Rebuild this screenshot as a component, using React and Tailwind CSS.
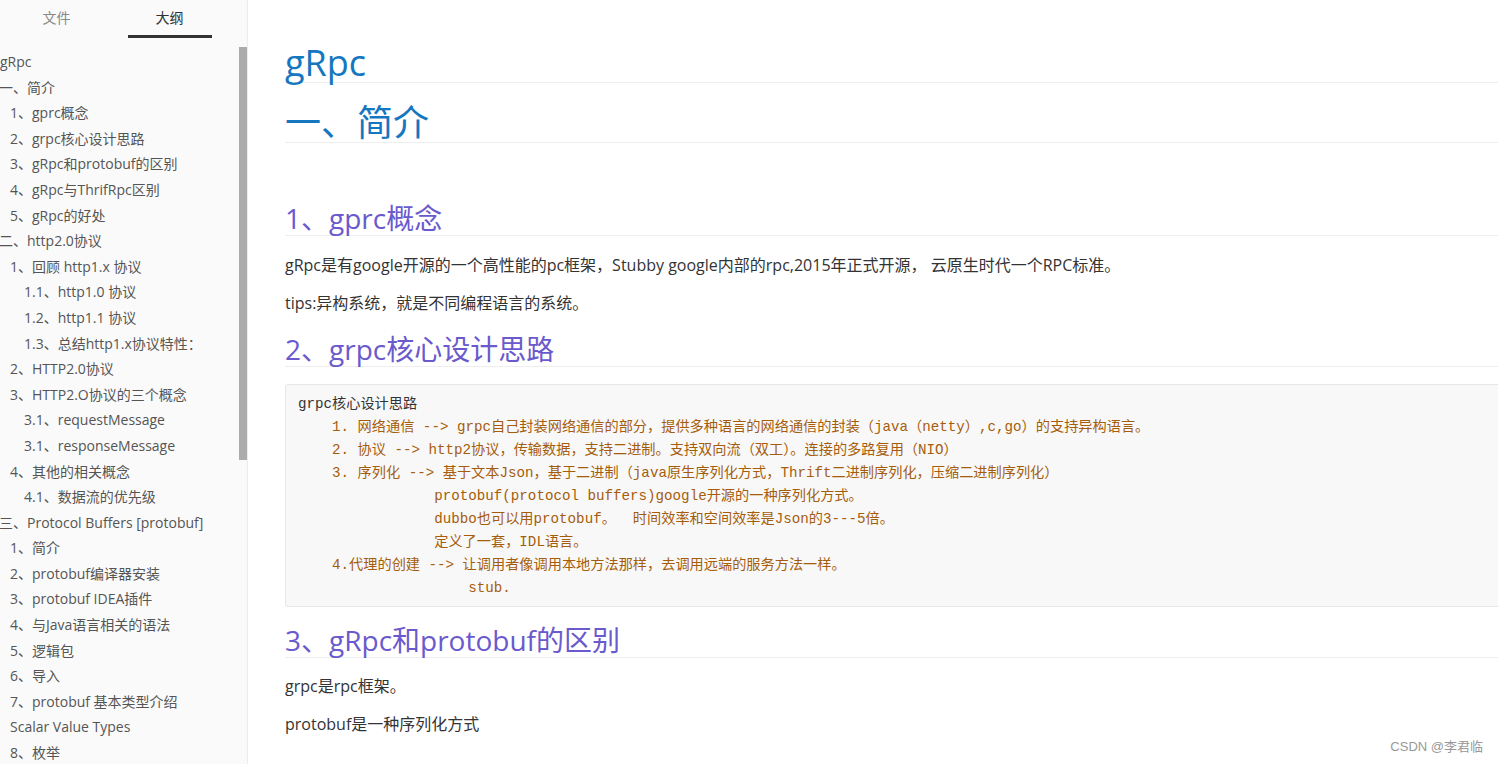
import React from 'react'

const outline = [
  { t: 'gRpc', x: 0 },
  { t: '一、简介', x: -1 },
  { t: '1、gprc概念', x: 10 },
  { t: '2、grpc核心设计思路', x: 10 },
  { t: '3、gRpc和protobuf的区别', x: 10 },
  { t: '4、gRpc与ThrifRpc区别', x: 10 },
  { t: '5、gRpc的好处', x: 10 },
  { t: '二、http2.0协议', x: -1 },
  { t: '1、回顾 http1.x 协议', x: 10 },
  { t: '1.1、http1.0 协议', x: 24 },
  { t: '1.2、http1.1 协议', x: 24 },
  { t: '1.3、总结http1.x协议特性：', x: 24 },
  { t: '2、HTTP2.0协议', x: 10 },
  { t: '3、HTTP2.O协议的三个概念', x: 10 },
  { t: '3.1、requestMessage', x: 24 },
  { t: '3.1、responseMessage', x: 24 },
  { t: '4、其他的相关概念', x: 10 },
  { t: '4.1、数据流的优先级', x: 24 },
  { t: '三、Protocol Buffers [protobuf]', x: -1 },
  { t: '1、简介', x: 10 },
  { t: '2、protobuf编译器安装', x: 10 },
  { t: '3、protobuf IDEA插件', x: 10 },
  { t: '4、与Java语言相关的语法', x: 10 },
  { t: '5、逻辑包', x: 10 },
  { t: '6、导入', x: 10 },
  { t: '7、protobuf 基本类型介绍', x: 10 },
  { t: 'Scalar Value Types', x: 10 },
  { t: '8、枚举', x: 10 },
]

const codeLines = [
  '    1. 网络通信 --> grpc自己封装网络通信的部分，提供多种语言的网络通信的封装（java（netty）,c,go）的支持异构语言。',
  '    2. 协议 --> http2协议，传输数据，支持二进制。支持双向流（双工）。连接的多路复用（NIO）',
  '    3. 序列化 --> 基于文本Json，基于二进制（java原生序列化方式，Thrift二进制序列化，压缩二进制序列化）',
  '                protobuf(protocol buffers)google开源的一种序列化方式。',
  '                dubbo也可以用protobuf。  时间效率和空间效率是Json的3---5倍。',
  '                定义了一套，IDL语言。',
  '    4.代理的创建 --> 让调用者像调用本地方法那样，去调用远端的服务方法一样。',
  '                    stub.',
]

const sans = "font-['Open_Sans','Noto_Sans_CJK_SC',sans-serif]"

const Sidebar = () => {
  return (
    <div className={`w-[248px] shrink-0 h-full bg-[#fafafa] border-r border-[#ececec] flex flex-col ${sans}`}>
      <div className="h-[47px] w-[226px] flex shrink-0">
        <div className="flex-1 flex justify-center">
          <div className="pt-[8px] text-[14px] leading-[20px] text-[#888]">文件</div>
        </div>
        <div className="flex-1 flex flex-col items-center">
          <div className="pt-[8px] text-[14px] leading-[20px] text-[#333]">大纲</div>
          <div className="mt-[7px] w-[84px] h-[3px] bg-[#333]"></div>
        </div>
      </div>
      <div className="flex flex-1 overflow-hidden">
        <div className="flex-1 pt-[2px] overflow-hidden">
          {outline.map((o, i) => (
            <div
              key={i}
              className="h-[25.6px] leading-[25.6px] text-[14px] text-[#555] whitespace-nowrap"
              style={{ paddingLeft: o.x > 0 ? o.x : 0, marginLeft: o.x < 0 ? o.x : 0 }}
            >
              {o.t}
            </div>
          ))}
        </div>
        <div className="w-[8px] shrink-0">
          <div className="h-[413px] bg-[#acacac]"></div>
        </div>
      </div>
    </div>
  )
}

const H3 = ({ children, className }) => (
  <h3 className={`text-[28px] leading-[34px] text-[#6a5acd] border-b border-[#eeeeee] ${className}`}>{children}</h3>
)

const App = () => {
  return (
    <div className="w-[1498px] h-[764px] overflow-hidden bg-white flex relative">
      <Sidebar />
      <div className={`flex-1 overflow-hidden pl-[37px] ${sans}`}>
        <h1 className="mt-[43px] text-[36px] leading-[39px] text-[#1477c0] border-b border-[#eeeeee]">gRpc</h1>
        <h2 className="mt-[20px] text-[36px] leading-[39px] text-[#1477c0] border-b border-[#eeeeee]">一、简介</h2>
        <H3 className="mt-[58px]">1、gprc概念</H3>
        <p className="mt-[17px] text-[16px] leading-[24px] text-[#333]">
          gRpc是有google开源的一个高性能的pc框架，Stubby google内部的rpc,2015年正式开源， 云原生时代一个RPC标准。
        </p>
        <p className="mt-[14px] text-[16px] leading-[24px] text-[#333]">tips:异构系统，就是不同编程语言的系统。</p>
        <H3 className="mt-[17px]">2、grpc核心设计思路</H3>
        <div className="mt-[17px] -mr-[4px] bg-[#f8f8f8] border border-[#e7e7e7] rounded-[3px] pl-[12px] pt-[8px] pb-[6px] font-['Liberation_Mono','Noto_Sans_CJK_SC',monospace] text-[14.2px] leading-[23px] whitespace-pre">
          <div className="text-[#333]">grpc核心设计思路</div>
          {codeLines.map((l, i) => (
            <div key={i} className="text-[#a55d0c]">{l}</div>
          ))}
        </div>
        <H3 className="mt-[16px]">3、gRpc和protobuf的区别</H3>
        <p className="mt-[16px] text-[16px] leading-[24px] text-[#333]">grpc是rpc框架。</p>
        <p className="mt-[14px] text-[16px] leading-[24px] text-[#333]">protobuf是一种序列化方式</p>
      </div>
      <div className="absolute right-[15px] bottom-[8px] text-[13px] leading-[18px] text-[#999] font-['Liberation_Sans','Noto_Sans_CJK_SC',sans-serif]">
        CSDN @李君临
      </div>
    </div>
  )
}

export default App
